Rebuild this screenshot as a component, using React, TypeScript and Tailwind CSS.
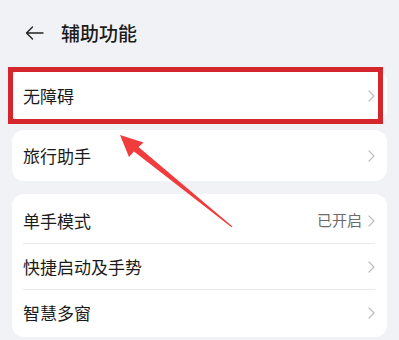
import React from "react";

function Chevron() {
  return (
    <svg width="7" height="12" viewBox="0 0 7 12" fill="none" className="shrink-0">
      <path d="M1 1 L6 6 L1 11" stroke="#bdbdbd" strokeWidth="1.2" strokeLinecap="round" strokeLinejoin="round" />
    </svg>
  );
}

function Row({ label, value }: { label: string; value?: string }) {
  return (
    <div className="flex items-center justify-between h-[45px]">
      <span className="text-[17px] text-[#1b1b1b]">{label}</span>
      <div className="flex items-center gap-[6px]">
        {value && <span className="text-[15px] text-[#6b6b6b]">{value}</span>}
        <Chevron />
      </div>
    </div>
  );
}

export default function App() {
  return (
    <div
      className="relative w-[399px] h-[340px] overflow-hidden bg-[#f1f2f5]"
      style={{ fontFamily: '"Noto Sans CJK SC", "Noto Sans", sans-serif' }}
    >
      <div className="flex items-center h-[66px] pl-[25px]">
        <svg width="19" height="14" viewBox="0 0 19 14" fill="none">
          <path d="M18 7 H1.5 M7.5 1 L1.5 7 L7.5 13" stroke="#222" strokeWidth="1.4" strokeLinecap="round" strokeLinejoin="round" />
        </svg>
        <span className="ml-[17px] text-[19px] font-medium text-[#1b1b1b]">辅助功能</span>
      </div>

      <div className="flex flex-col px-[12px]">
        <div className="relative mt-[4px] h-[51px] rounded-[12px] bg-white flex items-center justify-between pl-[11px] pr-[12px]">
          <span className="text-[17px] text-[#1b1b1b]">无障碍</span>
          <Chevron />
          <div className="absolute left-[-4px] right-[4px] top-[-3px] bottom-[-3px] border-[5px] border-[#d5262d]" />
        </div>

        <div className="mt-[9px] h-[51px] rounded-[12px] bg-white flex items-center justify-between pl-[11px] pr-[12px]">
          <span className="text-[17px] text-[#1b1b1b]">旅行助手</span>
          <Chevron />
        </div>

        <div className="mt-[13px] rounded-[12px] bg-white pt-[4px] pb-[2px] pl-[11px] pr-[12px] flex flex-col">
          <Row label="单手模式" value="已开启" />
          <div className="h-px bg-[#e8e8ea]" />
          <Row label="快捷启动及手势" />
          <div className="h-px bg-[#e8e8ea]" />
          <Row label="智慧多窗" />
        </div>
      </div>

      <svg className="absolute left-0 top-0 pointer-events-none" width="399" height="340" viewBox="0 0 399 340">
        <polygon
          points="120,135 143.5,142.5 138.5,147 232.5,226.5 231.5,227.2 134,151.5 129,157"
          fill="#f03c3c"
        />
      </svg>
    </div>
  );
}
